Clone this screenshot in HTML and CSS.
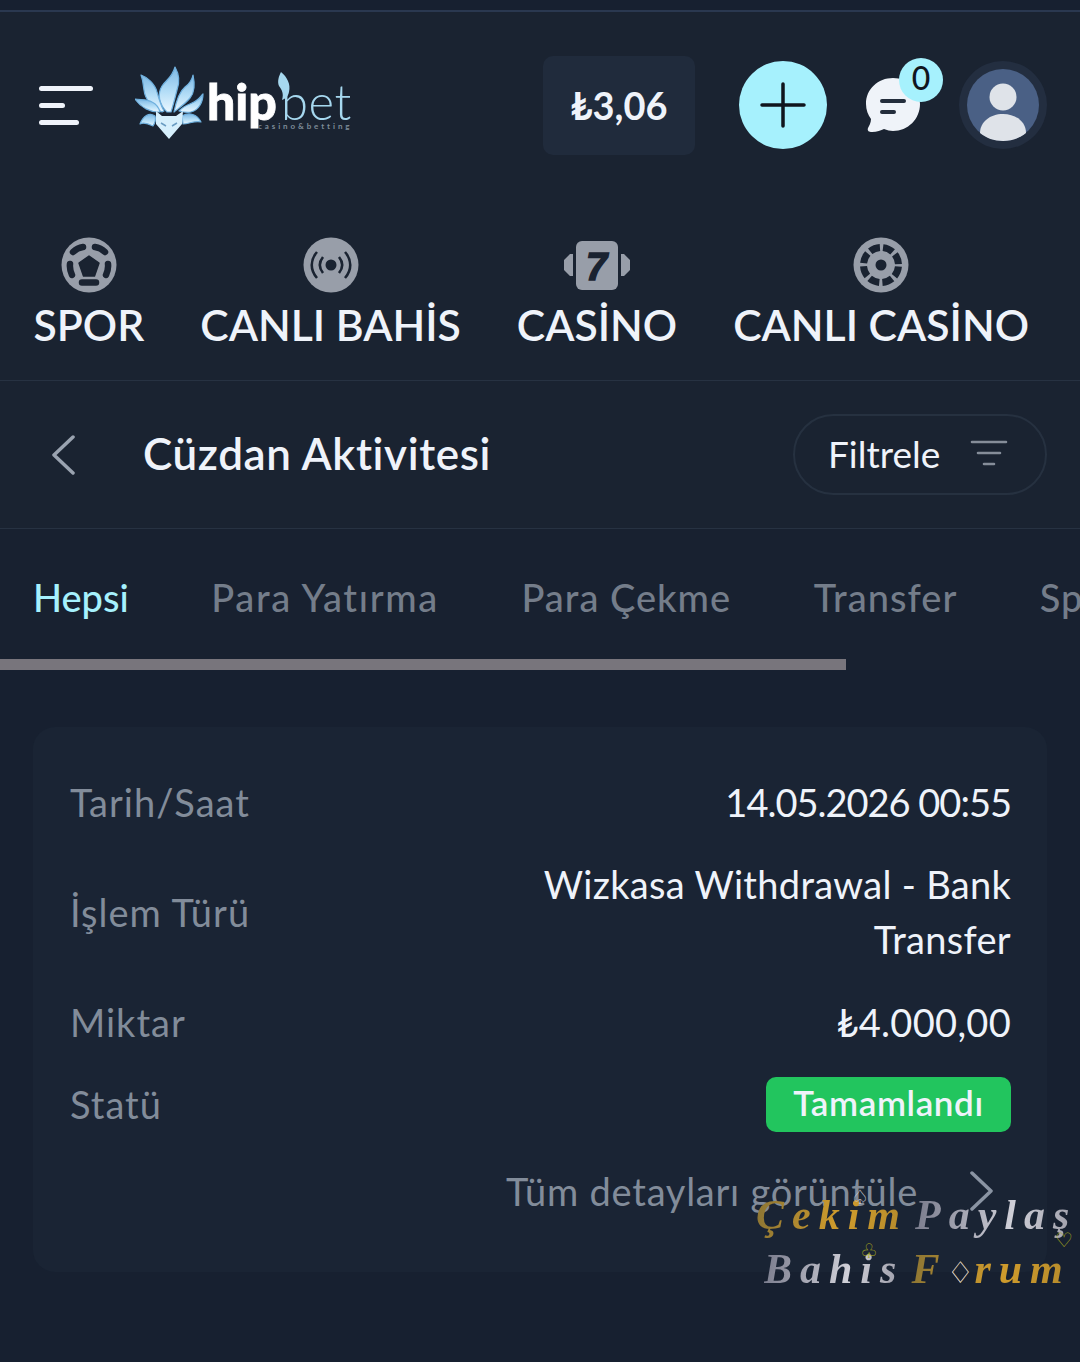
FILE: index.html
```html
<!DOCTYPE html>
<html lang="tr">
  <head>
    <meta charset="UTF-8" />
    <meta name="viewport" content="width=device-width, initial-scale=1.0" />
    <title>Cüzdan Aktivitesi</title>
    <link rel="stylesheet" href="styles.css">
  </head>
  <body>
    <header class="header">
      <div class="menu-icon"><span class="line-a"></span><span class="line-b"></span><span class="line-c"></span></div>
      <div class="logo">
        <svg class="fox" width="72" height="76" viewBox="0 0 72 76">
          <defs>
            <linearGradient id="tail" x1="0" y1="0" x2="0" y2="1">
              <stop offset="0" stop-color="#7db8e4" />
              <stop offset="0.55" stop-color="#b4def7" />
              <stop offset="1" stop-color="#eaf7ff" />
            </linearGradient>
          </defs>
          <g fill="url(#tail)" stroke="#6fb0de" stroke-width="1.2" stroke-linejoin="round">
            <path d="M32 46C24 38 22 28 27 20 30 15 37 12 40 1 44 8 45 16 42 24 40 32 38 40 36 46Z" />
            <path d="M27 46C18 42 10 34 9 24 8 18 8 14 6 9 12 11 20 18 22 26 24 33 26 40 29 45Z" />
            <path d="M39 46C41 36 44 26 50 21 54 18 57 14 58 9 60 18 60 26 55 32 50 38 44 42 39 46Z" />
            <path d="M44 45C50 38 58 38 62 34 65 32 66 30 68 28 68 36 64 44 56 46 52 47 48 46 44 45Z" />
            <path d="M23 46C16 46 6 42 0 33 6 34 12 33 17 36 21 38 24 42 25 46Z" />
            <path d="M20 50C14 46 8 50 5 58 9 56 14 58 18 60 20 57 21 53 20 50Z" />
            <path d="M47 50C54 46 62 48 66 56 60 54 54 58 48 58Z" />
          </g>
          <path d="M21 45 27 50H41L48 45 47 58 34 73 21 58Z" fill="#d6effc" />
          <path d="M26 57 31 60M42 57 37 60" stroke="#6a9cc2" stroke-width="1.5" />
        </svg>
        <div class="wordmark">
          <span class="word-hip">hip</span><span class="word-bet">bet</span>
          <svg class="flame" width="14" height="28" viewBox="0 0 14 28"><path d="M4 0C10 5 14 12 12 20 11 25 8 27 5 28 7 22 5 18 2 14 0 9 2 4 4 0Z" fill="#a6d8ef" /></svg>
          <span class="tagline">casino&amp;betting</span>
        </div>
      </div>
      <div class="balance">₺3,06</div>
      <div class="plus-btn">
        <svg width="46" height="46" viewBox="0 0 46 46"><path d="M23 2V44M2 23H44" stroke="#10151d" stroke-width="3.5" stroke-linecap="round" /></svg>
      </div>
      <div class="chat">
        <svg width="54" height="56" viewBox="0 0 54 56">
          <path d="M27 1C12 1 0 12 0 27 0 33 2 38 5 42 5 46 3 49 2 51 1 54 3 55 6 55 11 55 15 53 18 52 21 53 24 54 27 54 42 54 54 42 54 27 54 12 42 1 27 1Z" fill="#eff3f9" />
          <path d="M16 24H38M16 35H28" stroke="#232d3c" stroke-width="4" stroke-linecap="round" />
        </svg>
        <span class="badge">0</span>
      </div>
      <div class="avatar">
        <svg width="72" height="72" viewBox="0 0 72 72">
          <circle cx="36" cy="36" r="36" fill="#4a6085" />
          <circle cx="36" cy="28" r="13.5" fill="#dfe3e9" />
          <path d="M13 64C13 53 23 45 36 45 49 45 59 53 59 64 53 69 45 72 36 72 27 72 19 69 13 64Z" fill="#dfe3e9" />
        </svg>
      </div>
    </header>

    <nav class="main-nav">
      <a class="nav-item">
        <svg width="56" height="56" viewBox="0 0 56 56">
          <circle cx="28" cy="28" r="27.5" fill="#989ea9" />
          <path d="M28 19 38 26 33.5 39H22.5L18 26Z" fill="#1a2331" stroke="#1a2331" stroke-width="1.5" stroke-linejoin="round" />
          <path d="M12 15C14.5 12.5 18 10.5 22 10M34 10C38 10.5 41.5 12.5 44 15M9 27C8.5 31 9.5 34.5 11 38M47 27C47.5 31 46.5 34.5 45 38M21 45.5H35" fill="none" stroke="#1a2331" stroke-width="6.5" stroke-linecap="round" />
        </svg>
        <span>SPOR</span>
      </a>
      <a class="nav-item">
        <svg width="56" height="56" viewBox="0 0 56 56">
          <circle cx="28" cy="28" r="27.5" fill="#989ea9" />
          <circle cx="28" cy="28" r="5.5" fill="#1a2331" />
          <path d="M20 20C16 25 16 31 20 36M36 20C40 25 40 31 36 36M14 15C7 23 7 33 14 41M42 15C49 23 49 33 42 41" fill="none" stroke="#1a2331" stroke-width="2.6" />
        </svg>
        <span>CANLI BAHİS</span>
      </a>
      <a class="nav-item">
        <svg width="66" height="56" viewBox="0 0 66 56">
          <rect x="12" y="4" width="42" height="49" rx="6" fill="#989ea9" />
          <path d="M9 17V39H6L0 33V23L6 17ZM57 17V39H60L66 33V23L60 17Z" fill="#989ea9" />
          <text x="32.5" y="43" class="slot-seven">7</text>
        </svg>
        <span>CASİNO</span>
      </a>
      <a class="nav-item">
        <svg width="56" height="56" viewBox="0 0 56 56">
          <circle cx="28" cy="28" r="27.5" fill="#989ea9" />
          <circle cx="28" cy="28" r="17.5" fill="none" stroke="#1a2331" stroke-width="7" stroke-dasharray="10.5 3.24" stroke-dashoffset="-1.62" />
          <circle cx="28" cy="28" r="5.5" fill="#1a2331" />
        </svg>
        <span>CANLI CASİNO</span>
      </a>
    </nav>

    <section class="title-bar">
      <svg class="back-icon" width="24" height="40" viewBox="0 0 24 40"><path d="M22 2 3 20 22 38" fill="none" stroke="#9aa3b0" stroke-width="3.5" stroke-linecap="round" stroke-linejoin="round" /></svg>
      <h1>Cüzdan Aktivitesi</h1>
      <button class="filter-btn">
        Filtrele
        <svg width="38" height="28" viewBox="0 0 38 28"><path d="M2 3H36M8 14H30M14 25H24" stroke="#858d99" stroke-width="2.6" stroke-linecap="round" /></svg>
      </button>
    </section>

    <section class="tabs">
      <div class="tab-list">
        <span class="tab active">Hepsi</span>
        <span class="tab tab-wide">Para Yatırma</span>
        <span class="tab">Para Çekme</span>
        <span class="tab">Transfer</span>
        <span class="tab">Spor</span>
      </div>
      <div class="tab-scroll"></div>
    </section>

    <main class="content">
      <div class="card">
        <div class="row"><span class="label">Tarih/Saat</span><span class="value date">14.05.2026 00:55</span></div>
        <div class="row"><span class="label">İşlem Türü</span><span class="value wrap">Wizkasa Withdrawal - Bank Transfer</span></div>
        <div class="row"><span class="label">Miktar</span><span class="value">₺4.000,00</span></div>
        <div class="row"><span class="label">Statü</span><span class="status">Tamamlandı</span></div>
        <div class="details">
          <span>Tüm detayları görüntüle</span>
          <svg width="24" height="40" viewBox="0 0 24 40"><path d="M2 2 21 20 2 38" fill="none" stroke="#8a94a3" stroke-width="3.5" stroke-linecap="round" stroke-linejoin="round" /></svg>
        </div>
      </div>
    </main>

    <div class="watermark">
      <div class="wm-line"><span class="gold">Çekim</span><span class="silver wm-gap">Paylaş</span></div>
      <div class="wm-line wm-second"><span class="silver">Bahis</span><span class="gold wm-gap">F<span class="wm-diamond">♢</span>rum</span></div>
      <span class="wm-suit wm-spade">♤</span>
      <span class="wm-suit wm-club">♧</span>
      <span class="wm-suit wm-heart">♡</span>
    </div>
  </body>
</html>
```

FILE: styles.css
```css
body {
  margin: 0;
  width: 1080px;
  height: 1362px;
  overflow: hidden;
  position: relative;
  background: #172030;
  font-family: Lato, "Noto Sans", sans-serif;
  color: #eff3fa;
}

.header {
  display: flex;
  align-items: center;
  height: 186px;
  margin-top: 10px;
  padding: 0 33px 0 39px;
  border-top: 2px solid #2a3850;
  background: #1a2331;
}
.menu-icon {
  display: flex;
  flex-direction: column;
  gap: 12px;
  width: 54px;
}
.menu-icon span {
  display: block;
  height: 5px;
  border-radius: 3px;
  background: #eff3fa;
}
.line-b {
  width: 26px;
}
.line-c {
  width: 40px;
}
.logo {
  display: flex;
  align-items: center;
  margin-left: 42px;
}
.fox {
  margin-top: -2px;
}
.wordmark {
  position: relative;
  display: flex;
  align-items: baseline;
  margin-top: -8px;
  line-height: 60px;
}
.word-hip {
  font-size: 50px;
  font-weight: 900;
  -webkit-text-stroke: 0.8px #fff;
  color: #fff;
}
.word-bet {
  font-size: 49px;
  font-weight: 300;
  margin-left: 4px;
  letter-spacing: 0.5px;
  color: #a6d8ef;
}
.flame {
  position: absolute;
  left: 70px;
  top: 1px;
}
.tagline {
  position: absolute;
  left: 51px;
  top: 50px;
  font-size: 8px;
  font-weight: 700;
  line-height: 10px;
  letter-spacing: 2.9px;
  color: #7d8b98;
  white-space: nowrap;
}
.balance {
  margin-left: auto;
  width: 152px;
  height: 99px;
  display: flex;
  align-items: center;
  justify-content: center;
  background: #202b3c;
  border-radius: 10px;
  font-size: 38px;
  font-weight: 700;
}
.plus-btn {
  width: 88px;
  height: 88px;
  margin-left: 44px;
  border-radius: 50%;
  background: #a6f1fd;
  display: flex;
  align-items: center;
  justify-content: center;
}
.chat {
  position: relative;
  width: 54px;
  height: 56px;
  margin-left: 39px;
}
.chat svg {
  display: block;
}
.badge {
  position: absolute;
  left: 33px;
  top: -19px;
  width: 44px;
  height: 44px;
  border-radius: 50%;
  background: #a6f1fd;
  color: #10151d;
  font-size: 32px;
  font-weight: 500;
  line-height: 39px;
  text-align: center;
}
.avatar {
  width: 88px;
  height: 88px;
  margin-left: 39px;
  border-radius: 50%;
  background: #232e40;
  display: flex;
  align-items: center;
  justify-content: center;
}

.main-nav {
  display: flex;
  gap: 56px;
  height: 143px;
  padding: 39px 0 0 33.5px;
  background: #1a2331;
  border-bottom: 1px solid #273242;
}
.nav-item {
  display: flex;
  flex-direction: column;
  align-items: center;
  white-space: nowrap;
  font-size: 42.7px;
  font-weight: 600;
  line-height: 64px;
}
.nav-item svg {
  display: block;
}
.slot-seven {
  font-family: "Liberation Sans", sans-serif;
  font-size: 38px;
  font-weight: 700;
  font-style: italic;
  text-anchor: middle;
  fill: #1a2331;
  stroke: #1a2331;
  stroke-width: 1.5px;
}

.title-bar {
  display: flex;
  align-items: center;
  height: 147px;
  padding: 0 33px 0 51px;
  background: #1a2331;
  border-bottom: 1px solid #273242;
}
.title-bar h1 {
  margin: 0 0 3px 68px;
  font-size: 44px;
  font-weight: 600;
  letter-spacing: 0.6px;
}
.filter-btn {
  margin-left: auto;
  width: 254px;
  height: 81px;
  display: flex;
  align-items: center;
  justify-content: space-between;
  padding: 0 37px 3px 33px;
  background: transparent;
  border: 2px solid #263140;
  border-radius: 41px;
  color: #eff3fa;
  font-family: inherit;
  font-size: 37px;
}

.tabs {
  background: #182130;
  height: 141px;
  display: flex;
  flex-direction: column;
}
.tab-list {
  display: flex;
  gap: 82.5px;
  padding: 45px 0 0 33px;
  height: 130px;
  box-sizing: border-box;
  white-space: nowrap;
  overflow: hidden;
}
.tab {
  font-size: 38px;
  font-weight: 500;
  letter-spacing: 1px;
  color: #747d8a;
}
.tab.active {
  letter-spacing: 0;
  color: #a6f1fd;
}
.tab.tab-wide {
  letter-spacing: 1.65px;
}
.tab-scroll {
  width: 846px;
  height: 11px;
  background: #78757c;
}

.content {
  padding: 57px 33px 0;
}
.card {
  height: 545px;
  box-sizing: border-box;
  padding: 47.5px 36px 0;
  background: #1a2434;
  border-radius: 22px;
  display: flex;
  flex-direction: column;
  gap: 27.5px;
}
.row {
  display: flex;
  align-items: center;
  justify-content: space-between;
  font-size: 38px;
  line-height: 55px;
}
.label {
  margin-left: 1px;
  letter-spacing: 1px;
  color: #828c9a;
}
.value {
  text-align: right;
  letter-spacing: 0.3px;
}
.value.date {
  letter-spacing: -1px;
}
.value.wrap {
  width: 480px;
}
.status {
  width: 245px;
  height: 55px;
  border-radius: 10px;
  background: #22c55e;
  font-size: 35px;
  font-weight: 600;
  line-height: 51px;
  letter-spacing: 0.6px;
  text-align: center;
}
.details {
  display: flex;
  align-items: center;
  justify-content: flex-end;
  gap: 52px;
  margin-top: 4px;
  font-size: 38px;
  line-height: 55px;
  letter-spacing: 0.75px;
  color: #828c9a;
  padding-right: 17px;
}

.watermark {
  position: absolute;
  left: 756px;
  top: 1188px;
  width: 324px;
  font-family: "Liberation Serif", serif;
  font-size: 42px;
  font-style: italic;
  font-weight: 700;
  letter-spacing: 8px;
  line-height: 54px;
  white-space: nowrap;
}
.wm-second {
  margin-left: 8px;
}
.wm-gap {
  margin-left: 7px;
}
.wm-diamond {
  font-size: 30px;
  font-style: normal;
  font-weight: 400;
  letter-spacing: 0;
  -webkit-text-fill-color: #c9c9d2;
}
.gold {
  background: linear-gradient(100deg, #8a7434, #d09c2c 55%, #b48a2c);
  -webkit-background-clip: text;
  background-clip: text;
  color: transparent;
}
.silver {
  background: linear-gradient(100deg, #77798a, #d0d0d8 60%, #9a9aa6);
  -webkit-background-clip: text;
  background-clip: text;
  color: transparent;
}
.wm-suit {
  position: absolute;
  font-size: 20px;
  line-height: 20px;
  font-style: normal;
  font-weight: 400;
  letter-spacing: 0;
}
.wm-spade {
  left: 95px;
  top: -1px;
  color: #c9c9d2;
}
.wm-club {
  left: 104px;
  top: 53px;
  color: #a8a81e;
}
.wm-heart {
  left: 299px;
  top: 42px;
  color: #a8a81e;
}
```
